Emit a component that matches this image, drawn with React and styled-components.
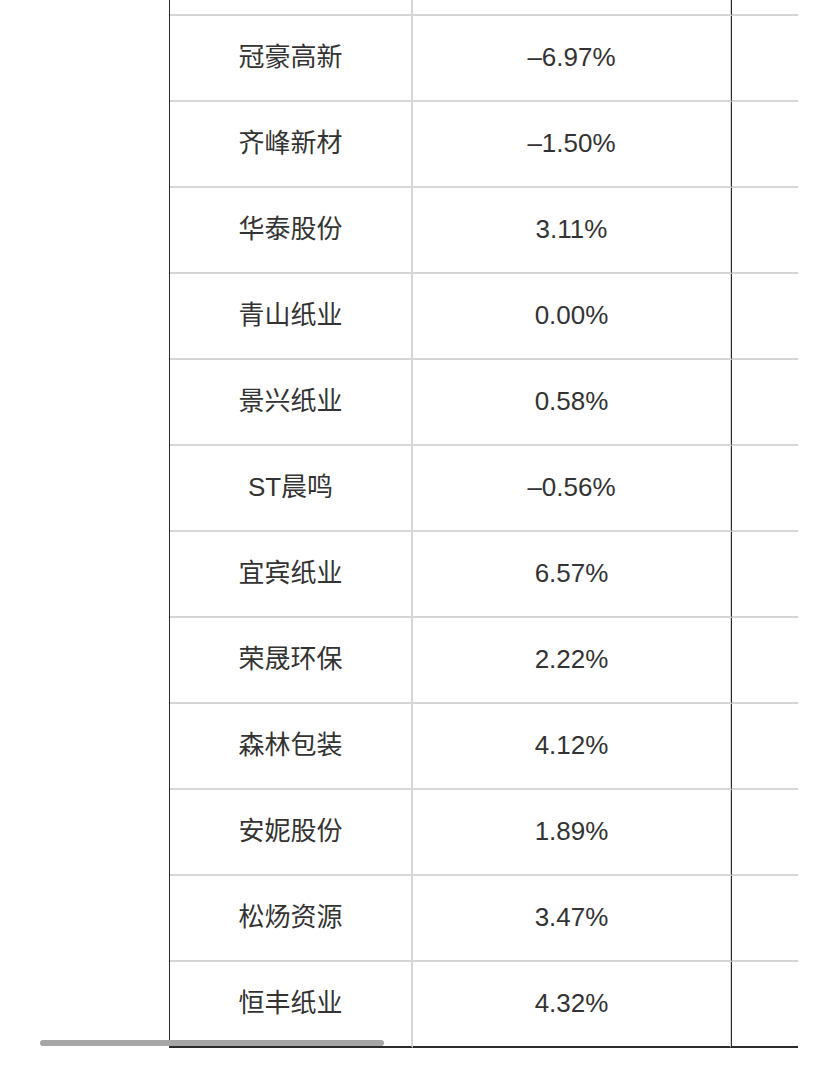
import React from "react";
import styled, { createGlobalStyle } from "styled-components";

const GlobalStyle = createGlobalStyle`
  html, body {
    margin: 0;
    padding: 0;
    background: #ffffff;
    overflow: hidden;
  }
`;

const Viewport = styled.div`
  position: relative;
  width: 827px;
  height: 1078px;
  overflow: hidden;
  background: #ffffff;
  font-family: "Liberation Sans", "Noto Sans CJK SC", sans-serif;
  color: #333333;
`;

const Table = styled.div`
  display: flex;
  flex-direction: column;
  width: 628px;
  margin-left: 169px;
  margin-top: -70px;
  border-left: 1px solid #2b2b2b;
`;

const Row = styled.div`
  display: flex;
  height: 86px;
`;

const Cell = styled.div`
  display: flex;
  align-items: center;
  justify-content: center;
  box-sizing: border-box;
  height: 86px;
  padding-bottom: 2px;
  font-size: 26px;
  line-height: 1;
  border-bottom: 2px solid ${(p) => (p.$last ? "#2b2b2b" : "#d6d6d6")};
`;

const NameCell = styled(Cell)`
  width: 243px;
  border-right: 2px solid #d6d6d6;
`;

const ValueCell = styled(Cell)`
  width: 318px;
  border-right: 1px solid #d6d6d6;
`;

const ExtraCell = styled(Cell)`
  width: 67px;
  border-left: 1px solid #2b2b2b;
`;

const ScrollThumb = styled.div`
  position: absolute;
  left: 40px;
  top: 1040px;
  width: 344px;
  height: 6px;
  border-radius: 3px;
  background: #a6a6a6;
`;

const rows = [
  { name: "", value: "" },
  { name: "冠豪高新", value: "–6.97%" },
  { name: "齐峰新材", value: "–1.50%" },
  { name: "华泰股份", value: "3.11%" },
  { name: "青山纸业", value: "0.00%" },
  { name: "景兴纸业", value: "0.58%" },
  { name: "ST晨鸣", value: "–0.56%" },
  { name: "宜宾纸业", value: "6.57%" },
  { name: "荣晟环保", value: "2.22%" },
  { name: "森林包装", value: "4.12%" },
  { name: "安妮股份", value: "1.89%" },
  { name: "松炀资源", value: "3.47%" },
  { name: "恒丰纸业", value: "4.32%" },
];

export default function App() {
  return (
    <Viewport>
      <GlobalStyle />
      <Table>
        {rows.map((row, i) => {
          const last = i === rows.length - 1;
          return (
            <Row key={i}>
              <NameCell $last={last}>{row.name}</NameCell>
              <ValueCell $last={last}>{row.value}</ValueCell>
              <ExtraCell $last={last}></ExtraCell>
            </Row>
          );
        })}
      </Table>
      <ScrollThumb />
    </Viewport>
  );
}
